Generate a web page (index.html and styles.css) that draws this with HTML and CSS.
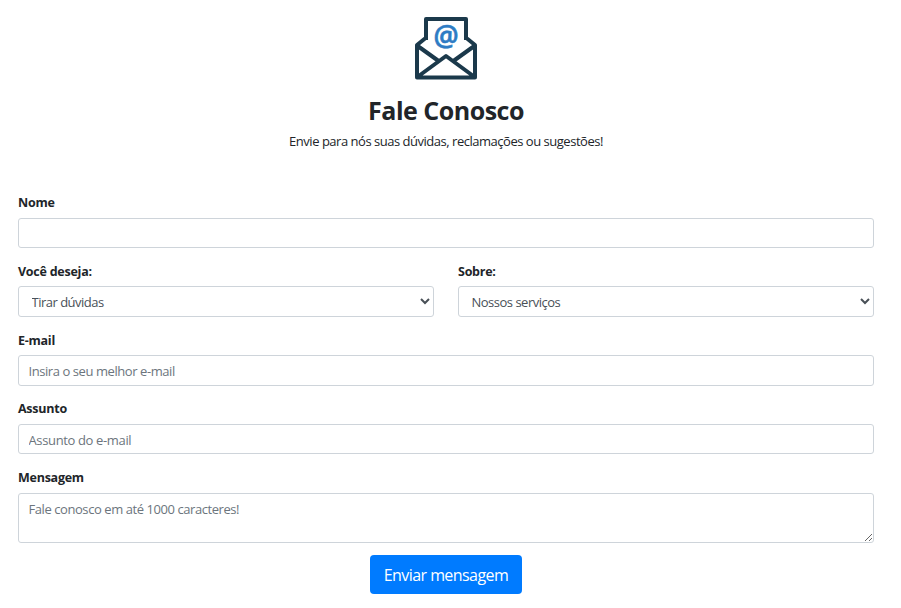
FILE: index.html
```html
<!DOCTYPE html>
<html lang="pt-BR">
<head>
<meta charset="utf-8">
<title>Fale Conosco</title>
<link rel="stylesheet" href="styles.css">
</head>
<body>
<main class="contact">
  <header class="intro">
    <svg class="logo" viewBox="0 0 64 64" width="64" height="64" aria-hidden="true">
      <path class="line" d="M12 24V3h40V24M11 22.5L3 29v32.500h58V29L53 22.500M3 29.500L26 46M61 29.500L38 46M4 60.500L32 40L60 60.500"/>
      <text class="at" x="32" y="30">@</text>
    </svg>
    <h1 class="title">Fale Conosco</h1>
    <p class="lead">Envie para nós suas dúvidas, reclamações ou sugestões!</p>
  </header>
  <form class="form">
    <div class="group">
      <label class="label" for="nome">Nome</label>
      <input class="control" id="nome" type="text">
    </div>
    <div class="row">
      <div class="group">
        <label class="label" for="deseja">Você deseja:</label>
        <select class="control select" id="deseja"><option>Tirar dúvidas</option></select>
      </div>
      <div class="group">
        <label class="label" for="sobre">Sobre:</label>
        <select class="control select" id="sobre"><option>Nossos serviços</option></select>
      </div>
    </div>
    <div class="group">
      <label class="label label-email" for="email">E-mail</label>
      <input class="control shifted" id="email" type="email" placeholder="Insira o seu melhor e-mail">
    </div>
    <div class="group">
      <label class="label" for="assunto">Assunto</label>
      <input class="control shifted subject" id="assunto" type="text" placeholder="Assunto do e-mail">
    </div>
    <div class="group">
      <label class="label label-area" for="mensagem">Mensagem</label>
      <textarea class="control area" id="mensagem" placeholder="Fale conosco em até 1000 caracteres!"></textarea>
    </div>
    <button class="submit" type="button">Enviar mensagem</button>
  </form>
</main>
</body>
</html>
```
FILE: styles.css
```css
* { box-sizing: border-box; }
body {
  margin: 0;
  background: #fff;
  color: #212529;
  font-family: "Segoe UI", "Open Sans", "Noto Sans", sans-serif;
  overflow: hidden;
}
.contact { width: 856px; margin-left: 18px; padding-top: 16px; }
.intro { height: 177px; text-align: center; }
.logo { display: block; margin: 0 auto; }
.line { fill: none; stroke: #1b394b; stroke-width: 4; stroke-linejoin: round; }
.at {
  fill: #2e7cc4;
  stroke: #2e7cc4;
  stroke-width: .6;
  font: 600 28px "Open Sans", sans-serif;
  text-anchor: middle;
}
.title { margin: 14px 0 0; font-size: 25px; line-height: 32px; font-weight: 700; letter-spacing: -.5px; }
.lead { margin: 5px 0 0; font-size: 13px; line-height: 20px; letter-spacing: -.48px; }
.group { height: 68.7px; }
.label {
  display: block;
  height: 24.7px;
  padding-top: 1px;
  font-size: 12.5px;
  font-weight: 700;
  line-height: 18px;
  letter-spacing: -.25px;
}
.label-email { padding-top: 2px; }
.label-area { height: 25.2px; }
.control {
  display: block;
  width: 100%;
  height: 30.5px;
  margin: 0;
  padding: 4px 9.5px;
  border: 1px solid #ced4da;
  border-radius: 3px;
  background: #fff;
  color: #495057;
  font: 13px/20px "Segoe UI", "Open Sans", "Noto Sans", sans-serif;
  letter-spacing: -.43px;
}
.control::placeholder { color: #6c757d; opacity: 1; }
.shifted { padding-top: 5px; padding-bottom: 3px; }
.subject { letter-spacing: -.36px; }
.select { padding-left: 8.5px; padding-right: 1px; letter-spacing: -.5px; }
.row { display: grid; grid-template-columns: 416px 416px; gap: 24px; }
.area { height: 50px; padding-top: 5px; resize: vertical; }
.submit {
  display: block;
  width: 152px;
  height: 39px;
  margin: 18.5px auto 0;
  padding: 2px 0 0;
  border: 0;
  border-radius: 4px;
  background: #007bff;
  color: #fff;
  font: 16px/24px "Segoe UI", "Open Sans", "Noto Sans", sans-serif;
  letter-spacing: -.57px;
}
```
